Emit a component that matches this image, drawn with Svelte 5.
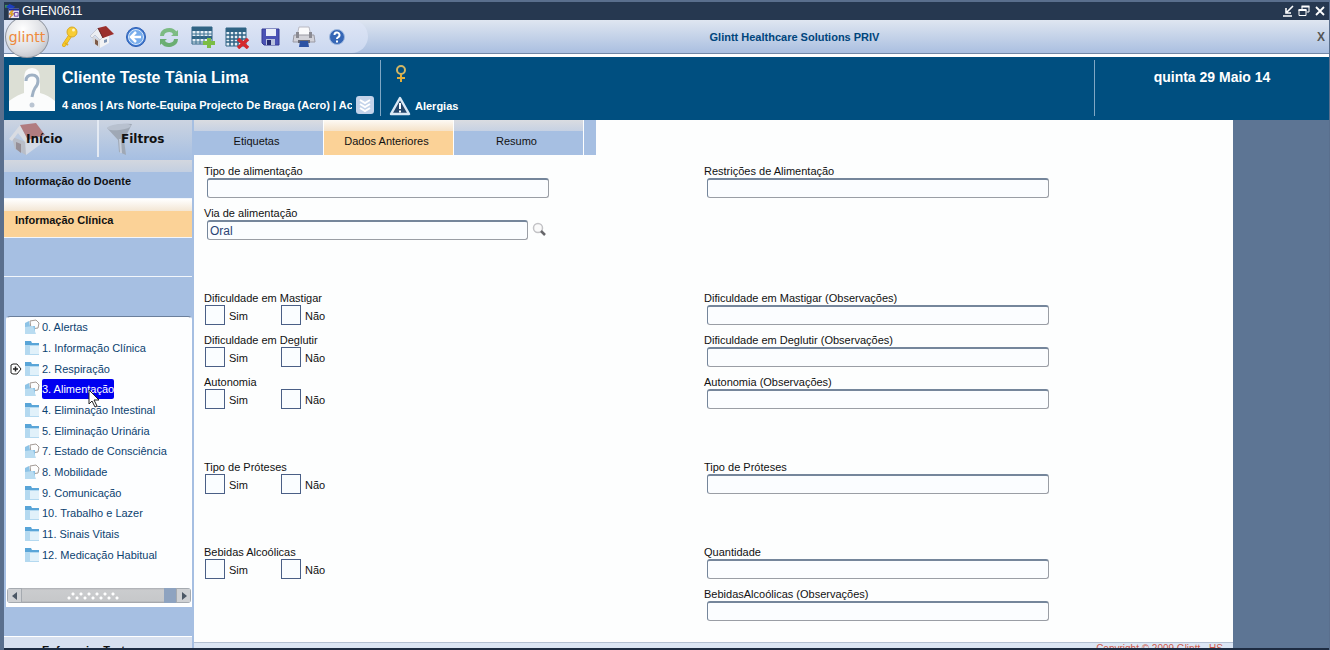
<script lang="ts">
	type TreeItem = { label: string; open?: boolean; expandable?: boolean; selected?: boolean };
	type Row = { id: string; label: string; note: string };

	const tools = [
		{ id: 'key', title: 'Chave' },
		{ id: 'home', title: 'Página inicial' },
		{ id: 'back', title: 'Voltar' },
		{ id: 'refresh', title: 'Atualizar' },
		{ id: 'add', title: 'Inserir registo' },
		{ id: 'remove', title: 'Remover registo' },
		{ id: 'save', title: 'Gravar' },
		{ id: 'print', title: 'Imprimir' },
		{ id: 'help', title: 'Ajuda' }
	];

	const tree: TreeItem[] = [
		{ label: '0. Alertas', open: true },
		{ label: '1. Informação Clínica' },
		{ label: '2. Respiração', expandable: true },
		{ label: '3. Alimentação', open: true, selected: true },
		{ label: '4. Eliminação Intestinal' },
		{ label: '5. Eliminação Urinária' },
		{ label: '7. Estado de Consciência', open: true },
		{ label: '8. Mobilidade', open: true },
		{ label: '9. Comunicação' },
		{ label: '10. Trabalho e Lazer' },
		{ label: '11. Sinais Vitais' },
		{ label: '12. Medicação Habitual' }
	];

	const tabs = ['Etiquetas', 'Dados Anteriores', 'Resumo'];
	let activeTab = $state('Dados Anteriores');

	const difficulties: Row[] = [
		{
			id: 'mastigar',
			label: 'Dificuldade em Mastigar',
			note: 'Dificuldade em Mastigar (Observações)'
		},
		{
			id: 'deglutir',
			label: 'Dificuldade em Deglutir',
			note: 'Dificuldade em Deglutir (Observações)'
		},
		{ id: 'autonomia', label: 'Autonomia', note: 'Autonomia (Observações)' }
	];

	let route = $state('Oral');
</script>

{#snippet textField(id: string, label: string)}
	<div class="field">
		<label for={id}>{label}</label>
		<input type="text" {id} />
	</div>
{/snippet}

{#snippet yesNo(id: string, label: string)}
	<fieldset class="field">
		<legend>{label}</legend>
		<div class="options">
			<label class="option"><input type="checkbox" name="{id}-sim" /><span>Sim</span></label>
			<label class="option"><input type="checkbox" name="{id}-nao" /><span>Não</span></label>
		</div>
	</fieldset>
{/snippet}

<div class="window">
	<div class="titlebar">
		<svg class="app-icon" viewBox="0 0 16 16">
			<path d="M0 1h5v3H0z" fill="#3b8f5a" />
			<path d="M1 3l4-3 6 3-5 3z" fill="#1d3fc0" />
			<rect x="4" y="5" width="11" height="10" fill="#e8e4f0" />
			<path d="M4 5h11v2H4z" fill="#1a2a9c" />
			<path d="M7 7L4 11h3l-2 4 5-5H7l2-3z" fill="#f2d21b" stroke="#a3341c" stroke-width=".5" />
			<path d="M10 9h4v4h-4z" fill="none" stroke="#6a3fa8" />
		</svg>
		<span class="title">GHEN0611</span>
		<div class="window-buttons">
			<button aria-label="Minimizar">
				<svg viewBox="0 0 12 12">
					<path d="M1 11h9M11 1L5 7M4 3v5h5" fill="none" stroke="#fff" stroke-width="1.6" />
				</svg>
			</button>
			<button aria-label="Restaurar">
				<svg viewBox="0 0 12 12">
					<path d="M4 4V1.500h7V7H8.500M1 5h7v5.500H1z" fill="none" stroke="#fff" />
					<path d="M3.500 1.500h8M.5 5h8" stroke="#fff" stroke-width="1.800" />
				</svg>
			</button>
			<button aria-label="Fechar">
				<svg viewBox="0 0 12 12">
					<path d="M2 2l8 8M10 2l-8 8" fill="none" stroke="#fff" stroke-width="1.800" />
				</svg>
			</button>
		</div>
	</div>

	<div class="toolbar">
		<div class="tool-pill">
			<div class="logo">glintt</div>
			<nav class="tools">
				{#each tools as tool (tool.id)}
					<button title={tool.title} aria-label={tool.title}>
						<svg viewBox="0 0 24 24">
							{#if tool.id === 'key'}
								<path d="M13 11L7 20" stroke="#cf9d1a" stroke-width="4" stroke-linecap="round" />
								<path d="M13 11L7 20" stroke="#f7c928" stroke-width="3" stroke-linecap="round" />
								<path d="M8 18l3 2" stroke="#e0ae20" stroke-width="2" />
								<circle cx="15" cy="7" r="5" fill="#f8cd35" stroke="#d9aa25" />
								<circle cx="16.500" cy="5" r="1.500" fill="#fff3c0" />
							{:else if tool.id === 'home'}
								<path d="M2 11l8 4v8l-7-5z" fill="#d5d6da" />
								<path d="M10 14l9-4v8l-9 5z" fill="#f3f3f4" />
								<path d="M0 11L8 3l5 9-3 3-5-5-3 3z" fill="#eceef2" stroke="#a9adb8" stroke-width=".5" />
								<path d="M8 3l8-2 8 8-11 4z" fill="#9b2f2c" />
								<path d="M8 3l5 10" stroke="#64201f" />
								<path d="M5 14l3 2v5l-3-2z" fill="#7d5a48" />
								<path d="M14 15l3-1v3l-3 1z" fill="#7e94b4" />
							{:else if tool.id === 'back'}
								<circle cx="12" cy="12" r="9.500" fill="#3f78cf" stroke="#2d5fb4" />
								<circle cx="12" cy="12" r="7.500" fill="#78adec" stroke="#d9e8fb" />
								<path d="M17 12H8M12 7l-5 5 5 5" fill="none" stroke="#fff" stroke-width="2.500" />
							{:else if tool.id === 'refresh'}
								<path d="M5 11a7 6 0 0 1 13-3" fill="none" stroke="#7cbb82" stroke-width="4" />
								<path d="M19 14a7 6 0 0 1-13 3" fill="none" stroke="#6aae72" stroke-width="4" />
								<path d="M21 5v6h-7z" fill="#7cbb82" />
								<path d="M3 20v-6h7z" fill="#6aae72" />
							{:else if tool.id === 'add'}
								<path d="M1 2h20v17H1z" fill="#e6eef5" stroke="#2f6384" />
								<path d="M1 2h20v4H1zM1 11h20v3H1z" fill="#2f6384" />
								<path d="M5 6v13M9 6v13M13 6v13M17 6v13M1 9h20M1 17h20" stroke="#3d7392" />
								<path d="M18 13v10M12 18h12" stroke="#7bbd45" stroke-width="4" />
							{:else if tool.id === 'remove'}
								<path d="M1 3h20v18H1z" fill="#e6eef5" stroke="#2f6384" />
								<path d="M1 3h20v4H1z" fill="#2f6384" />
								<path d="M5 7v14M9 7v14M13 7v14M17 7v14M1 10h20M1 14h20M1 17h20" stroke="#2f6384" stroke-width="1.500" />
								<path d="M13 14l10 9M23 14l-10 9" stroke="#d42a2e" stroke-width="3.500" />
							{:else if tool.id === 'save'}
								<path d="M4 4h17v16H6l-2-2z" fill="#4a52b4" stroke="#343b94" />
								<path d="M8 4h10v7H8z" fill="#e9edf8" />
								<path d="M8 14h9v6H8z" fill="#b9c2dd" />
								<path d="M9 15h4v5H9z" fill="#252b70" />
							{:else if tool.id === 'print'}
								<path d="M7 2h10l2 9H5z" fill="#fafafc" stroke="#b8b8c2" />
								<path d="M2 10h20l1 7H1z" fill="#d2d2d9" stroke="#9a9aa4" />
								<path d="M4 10V7h3v6H4zM17 7h3v6h-3z" fill="#8a8a92" />
								<path d="M6 15h12v3H6z" fill="#6a6a74" />
								<path d="M8 16h8l1 6H7z" fill="#2b52a4" />
							{:else}
								<circle cx="12" cy="12" r="7.500" fill="#3566b6" stroke="#9db7df" />
								<path d="M9.500 10a2.500 2.500 0 1 1 3.500 2.300q-1 .5-1 1.700M12 15.500v2" fill="none" stroke="#fff" stroke-width="2" />
							{/if}
						</svg>
					</button>
				{/each}
			</nav>
		</div>
		<div class="product">Glintt Healthcare Solutions PRIV</div>
		<button class="close-page" aria-label="Fechar página">X</button>
	</div>

	<header class="patient">
		<svg class="photo" viewBox="0 0 46 46">
			<rect width="46" height="46" fill="#dcdfd5" />
			<path d="M0 36q10-7 15-8V14q0-11 8-11t8 11v14q8 2 15 8v10H0z" fill="#fbfcfc" />
			<path d="M17 16q0-6 6-6t6 6q0 4-3 7-2 3-3 9" fill="none" stroke="#9fb1c4" stroke-width="3" />
			<circle cx="23" cy="40" r="2.500" fill="#bac5d2" />
		</svg>
		<div class="identity">
			<h1>Cliente Teste Tânia Lima</h1>
			<div class="details">
				<p>4 anos | Ars Norte-Equipa Projecto De Braga (Acro) | Acto</p>
				<button class="more" aria-label="Mais detalhes">
					<svg viewBox="0 0 18 18">
						<path d="M4 4l5 3 5-3M4 8l5 3 5-3M4 12l5 3 5-3" fill="none" stroke="#fff" stroke-width="2" />
					</svg>
				</button>
			</div>
		</div>
		<div class="alerts">
			<svg class="gender" viewBox="0 0 12 18">
				<circle cx="6" cy="5" r="4" fill="none" stroke="#d2b765" stroke-width="2" />
				<path d="M6 9v8M2 13h8" stroke="#e3ae3b" stroke-width="2" />
			</svg>
			<a href="#alergias">
				<svg class="warning" viewBox="0 0 22 20">
					<path d="M11 2L20 18H2z" fill="#24466b" stroke="#d9e8f5" stroke-width="2.500" stroke-linejoin="round" />
					<path d="M11 7v6M11 14.500v2" stroke="#fff" stroke-width="2" />
				</svg>
				Alergias
			</a>
		</div>
		<time datetime="2014-05-29">quinta 29 Maio 14</time>
	</header>

	<div class="body">
		<aside class="sidebar">
			<div class="shortcuts">
				<button>
					<svg viewBox="0 0 38 34">
						<path d="M4 15l14 5v13L7 27z" fill="#b9bec8" />
						<path d="M17 18l16-5v9l-15 11z" fill="#d5dbe6" />
						<path d="M1 17L12 3l8 15-3 2-7-9-6 8z" fill="#d9dce2" />
						<path d="M12 3l16-2 9 12-17 5z" fill="#b17c80" />
						<path d="M8 20l5 2v9l-5-4z" fill="#968f96" />
					</svg>
					<span>Início</span>
				</button>
				<button>
					<svg viewBox="0 0 38 34">
						<path d="M4 6q12-5 25-4L21 18l2 15-7-3-1-12z" fill="#9fa8b5" />
						<ellipse cx="16" cy="5" rx="12" ry="3" fill="#b8c1cf" transform="rotate(-6 16 5)" />
						<path d="M17 17l1 14" stroke="#c7cedb" stroke-width="2" />
					</svg>
					<span>Filtros</span>
				</button>
			</div>
			<nav class="sections">
				<a href="#doente">Informação do Doente</a>
				<a href="#clinica" class="active">Informação Clínica</a>
				<div class="blank"></div>
				<div class="blank"></div>
			</nav>
			<div class="tree-panel">
				<ul class="tree">
					{#each tree as item (item.label)}
						<li>
							<span class="toggle">
								{#if item.expandable}
									<svg viewBox="0 0 12 12">
										<path d="M1 2l2-1h4l4 5-4 5H3l-2-1z" fill="#fff" stroke="#222" />
										<path d="M3 6h5M5.500 3.500v5" stroke="#222" stroke-width="1.500" />
									</svg>
								{/if}
							</span>
							<svg class="folder" viewBox="0 0 16 16">
								{#if item.open}
									<path d="M6 2l6-1 3 3-1 5-7 1z" fill="#fdfdfd" stroke="#a39b96" />
									<path d="M1 4l4-2 1 5h5v8H1z" fill="#8dc3e6" />
									<path d="M1 8l8-1 3 8H1z" fill="#b9dcf1" />
								{:else}
									<path d="M1 1h6l1 2h7v12H1z" fill="#59a5d8" />
									<path d="M1 5h14v10H1z" fill="#b4d9f0" />
									<path d="M6 6h9v8H6z" fill="#e1f1fa" />
								{/if}
							</svg>
							<a href="#tree" class:selected={item.selected}>{item.label}</a>
							{#if item.selected}
								<svg class="pointer" viewBox="0 0 12 19">
									<path d="M1 1v14l3-3 3 6 2-1-3-6h5z" fill="#fff" stroke="#222" />
								</svg>
							{/if}
						</li>
					{/each}
				</ul>
				<div class="scrollbar">
					<button aria-label="Deslocar para a esquerda">
						<svg viewBox="0 0 8 8"><path d="M6 0v8L1 4z" fill="#4c5866" /></svg>
					</button>
					<div class="thumb"><span></span></div>
					<button aria-label="Deslocar para a direita">
						<svg viewBox="0 0 8 8"><path d="M2 0v8l5-4z" fill="#4c5866" /></svg>
					</button>
				</div>
			</div>
			<div class="sidebar-footer">Enfermeiro Teste</div>
		</aside>

		<main>
			<div class="tabs">
				{#each tabs as tab (tab)}
					<button class:active={tab === activeTab} onclick={() => (activeTab = tab)}>{tab}</button>
				{/each}
				<div class="tabs-end"></div>
			</div>

			<form>
				<div class="group">
					{@render textField('tipo', 'Tipo de alimentação')}
					{@render textField('restricoes', 'Restrições de Alimentação')}
					<div class="field">
						<label for="via">Via de alimentação</label>
						<div class="lookup">
							<input type="text" id="via" bind:value={route} />
							<button type="button" aria-label="Pesquisar">
								<svg viewBox="0 0 16 16">
									<circle cx="7" cy="6" r="4.500" fill="#fafafa" stroke="#c3c3c6" stroke-width="1.500" />
									<path d="M10 9l4 4" stroke="#66666a" stroke-width="2.500" />
								</svg>
							</button>
						</div>
					</div>
				</div>
				<div class="group">
					{#each difficulties as row (row.id)}
						{@render yesNo(row.id, row.label)}
						{@render textField(`${row.id}-obs`, row.note)}
					{/each}
				</div>
				<div class="group">
					{@render yesNo('proteses', 'Tipo de Próteses')}
					{@render textField('proteses-tipo', 'Tipo de Próteses')}
				</div>
				<div class="group">
					{@render yesNo('bebidas', 'Bebidas Alcoólicas')}
					{@render textField('quantidade', 'Quantidade')}
					<div></div>
					{@render textField('bebidas-obs', 'BebidasAlcoólicas (Observações)')}
				</div>
			</form>

			<footer>Copyright © 2009 Glintt - HS</footer>
		</main>
	</div>
</div>

<style>
	:global(body) {
		background: #5d7594;
	}

	.window {
		--navy: #263850;
		--petrol: #004f80;
		--blue: #a6bfe2;
		--orange: #fbd297;
		--shade: linear-gradient(#d3d7df, #c3cfe1);
		display: flex;
		flex-direction: column;
		box-sizing: border-box;
		height: 100vh;
		overflow: hidden;
		border: solid #5a6f8d;
		border-width: 2px 1px 0 4px;
		font-family: 'Liberation Sans', Arial, sans-serif;
		font-size: 11px;
		color: #111;
	}

	.window > * {
		flex: none;
	}

	button {
		padding: 0;
		border: 0;
		background: none;
		font: inherit;
		color: inherit;
		cursor: pointer;
	}

	svg {
		display: block;
	}

	a {
		color: inherit;
		text-decoration: none;
	}

	/* Title bar */
	.titlebar {
		display: flex;
		align-items: center;
		gap: 2px;
		height: 18px;
		padding: 0 3px 0 1px;
		background: var(--navy);
		z-index: 2;
	}

	.app-icon {
		width: 15px;
		height: 15px;
	}

	.title {
		flex: 1;
		font-size: 12px;
		color: #fff;
	}

	.window-buttons {
		display: flex;
		gap: 4px;
	}

	.window-buttons svg {
		width: 12px;
		height: 12px;
	}

	/* Toolbar */
	.toolbar {
		display: flex;
		align-items: center;
		height: 33px;
		border-bottom: 1px solid #7187a6;
		background: linear-gradient(#dfe6f1, #aabfe0);
	}

	.tool-pill {
		display: flex;
		align-items: center;
		width: 364px;
		height: 33px;
		border-radius: 0 17px 17px 0;
		background: linear-gradient(#dfe6f5, #cbd8f0);
	}

	.logo {
		display: flex;
		align-items: center;
		justify-content: center;
		flex: none;
		box-sizing: border-box;
		width: 44px;
		height: 42px;
		margin: 0 3px 0 1px;
		border: 1px solid #8e949e;
		border-radius: 50%;
		background: radial-gradient(circle at 40% 30%, #fff, #d9dbe0 60%, #a9adb6);
		font-family: 'DejaVu Sans', sans-serif;
		font-size: 14px;
		color: #ee8a3c;
		z-index: 1;
	}

	.tools {
		display: flex;
		width: 302px;
	}

	.tools button {
		display: flex;
		flex: 1;
		justify-content: center;
	}

	.tools svg {
		width: 24px;
		height: 24px;
		fill: none;
	}

	.product {
		flex: 1;
		padding-right: 92px;
		text-align: center;
		font-weight: bold;
		color: #00457c;
	}

	.close-page {
		padding: 0 4px;
		font-size: 12px;
		font-weight: bold;
		color: #555;
	}

	/* Patient header */
	.patient {
		display: flex;
		align-items: center;
		height: 62px;
		border-top: 3px solid #fff;
		background: var(--petrol);
		font-weight: bold;
		color: #fff;
	}

	.photo {
		width: 46px;
		height: 46px;
		margin: 0 7px 0 5px;
	}

	.identity {
		width: 318px;
		padding-top: 6px;
	}

	h1 {
		margin: 0 0 8px;
		font-size: 16px;
		font-weight: bold;
		line-height: 20px;
	}

	.details {
		display: flex;
		align-items: center;
		gap: 4px;
	}

	.details p {
		width: 290px;
		margin: 0;
		overflow: hidden;
		white-space: nowrap;
	}

	.more {
		border-radius: 3px;
		background: #c3d3ea;
	}

	.more svg {
		width: 18px;
		height: 18px;
	}

	.alerts {
		flex: 1;
		padding: 5px 8px 0;
		border: solid #7fa7c4;
		border-width: 0 1px;
	}

	.gender {
		width: 12px;
		height: 18px;
		margin: 0 0 13px 6px;
	}

	.alerts a {
		display: flex;
		align-items: center;
		gap: 4px;
	}

	.warning {
		width: 22px;
		height: 20px;
	}

	time {
		align-self: flex-start;
		width: 234px;
		padding-top: 12px;
		text-align: center;
		font-size: 14px;
	}

	/* Page body */
	.window > .body {
		display: flex;
		flex: 1;
		min-height: 0;
		border-top: 1px solid var(--petrol);
		border-bottom: 2px solid #1e2c42;
		background: #5d7594;
	}

	.sidebar {
		display: flex;
		flex-direction: column;
		flex: none;
		box-sizing: border-box;
		width: 190px;
		padding-right: 2px;
		overflow: hidden;
		background: var(--blue);
	}

	.shortcuts {
		display: flex;
		flex: none;
		height: 40px;
		background: linear-gradient(#ccd4e1, var(--blue));
	}

	.shortcuts button {
		display: flex;
		align-items: center;
		flex: 1;
		height: 37px;
		font-family: 'DejaVu Sans', Verdana, sans-serif;
		font-size: 12px;
		font-weight: bold;
	}

	.shortcuts button + button {
		border-left: 2px solid #e4eaf3;
	}

	.shortcuts svg {
		width: 38px;
		height: 34px;
		margin: 0 -20px 0 4px;
	}

	.shortcuts span {
		position: relative;
	}

	.sections a,
	.sections .blank {
		display: block;
		box-sizing: border-box;
		height: 39px;
		border-bottom: 1px solid #f2f6fb;
	}

	.sections a {
		padding: 15px 11px 0;
		background: var(--shade) 0 0 / 100% 12px no-repeat;
		font-weight: bold;
	}

	.sections a.active {
		background:
			linear-gradient(#fff, #f3e6d4) 0 0 / 100% 12px no-repeat,
			var(--orange);
	}

	.sections .blank:last-child {
		border-bottom: 0;
	}

	.tree-panel {
		display: flex;
		flex-direction: column;
		flex: none;
		margin-left: 2px;
		padding-bottom: 3px;
		border: 1px solid #fff;
		border-top: 1px solid #6b7f9b;
		border-radius: 4px 4px 0 0;
		background: #fdfeff;
	}

	.tree {
		display: grid;
		grid-auto-rows: 1fr;
		height: 248px;
		margin: 0 0 23px;
		padding: 0;
		list-style: none;
		color: #0c4270;
	}

	.tree li {
		display: flex;
		align-items: center;
		position: relative;
	}

	.toggle {
		width: 14px;
		padding-left: 3px;
	}

	.toggle svg {
		width: 12px;
		height: 12px;
	}

	.folder {
		width: 16px;
		height: 16px;
		margin-right: 2px;
	}

	.tree a {
		line-height: 20px;
		white-space: nowrap;
	}

	.tree a.selected {
		border-radius: 2px;
		background: #0000f0;
		color: #fff;
	}

	.pointer {
		position: absolute;
		top: 10px;
		left: 81px;
		width: 12px;
		height: 19px;
		z-index: 1;
	}

	.scrollbar {
		display: flex;
		height: 15px;
		border-radius: 4px;
		background: #8ea3c0;
		overflow: hidden;
	}

	.scrollbar button {
		display: flex;
		align-items: center;
		justify-content: center;
		width: 15px;
		background: #cfd1d4;
		box-shadow: inset 0 0 0 1px #a5aab0;
	}

	.scrollbar svg {
		width: 8px;
		height: 8px;
	}

	.thumb {
		display: flex;
		align-items: center;
		justify-content: center;
		flex: 1;
		margin-right: 12px;
		background: linear-gradient(#a9acb1, #cbccce 2px, #c6c8ca 13px, #9a9da3);
	}

	.thumb span {
		width: 52px;
		height: 8px;
		background:
			radial-gradient(circle at 6px 2px, #fff 1px, transparent 2px) 0 0 / 8px 8px,
			radial-gradient(circle at 2px 6px, #fff 1px, transparent 2px) 0 0 / 8px 8px;
	}

	.sidebar-footer {
		margin-top: auto;
		height: 11px;
		padding-left: 38px;
		border-top: 1px solid #fff;
		background: #d7e0ef;
		font-weight: bold;
		line-height: 26px;
	}

	/* Form page */
	main {
		display: flex;
		flex-direction: column;
		flex: 1;
		min-width: 0;
		margin-right: 96px;
		background: #fdfefe;
	}

	.tabs {
		display: flex;
		gap: 1px;
		height: 35px;
	}

	.tabs button {
		width: 129px;
		padding: 6px 4px 0 0;
		background:
			linear-gradient(#dadce1, #c6d1e3) 0 0 / 100% 11px no-repeat,
			var(--blue);
	}

	.tabs button.active {
		background:
			linear-gradient(#fdfaf5, #f5e2c8) 0 0 / 100% 11px no-repeat,
			var(--orange);
	}

	.tabs-end {
		width: 12px;
		background: var(--blue);
	}

	form {
		display: flex;
		flex-direction: column;
		gap: 51px;
		flex: 1;
		padding: 9px 29px 0 10px;
	}

	.group {
		display: grid;
		grid-template-columns: 1fr 1fr;
		row-gap: 8px;
	}

	.field {
		min-width: 0;
		margin: 0;
		padding: 0;
		border: 0;
	}

	.field > label,
	legend {
		display: block;
		height: 14px;
		padding: 0;
		line-height: 14px;
	}

	input[type='text'] {
		display: block;
		box-sizing: border-box;
		width: 342px;
		max-width: 100%;
		height: 20px;
		margin: 0 0 0 3px;
		padding: 0 2px;
		border: 1px solid #9a9ea5;
		border-top: 2px solid #75869b;
		border-left-color: #75869b;
		border-radius: 3px;
		background: #fbfdff;
		font: inherit;
		font-size: 12px;
		color: #2b4474;
	}

	.lookup {
		display: flex;
		align-items: center;
		gap: 3px;
	}

	.lookup input[type='text'] {
		width: 321px;
	}

	.lookup svg {
		width: 16px;
		height: 16px;
	}

	.options {
		display: flex;
		padding-left: 1px;
	}

	.option {
		display: flex;
		align-items: center;
		gap: 4px;
		width: 76px;
	}

	.option span {
		padding-top: 2px;
	}

	input[type='checkbox'] {
		appearance: none;
		box-sizing: border-box;
		width: 20px;
		height: 20px;
		margin: 0;
		border: 1px solid #4a5f86;
		background: #fafdff;
	}

	input[type='checkbox']:checked {
		background: #4a5f86;
		box-shadow: inset 0 0 0 4px #fafdff;
	}

	footer {
		height: 5px;
		padding-right: 10px;
		border-top: 1px solid #b4c0d2;
		overflow: hidden;
		background: #dce6f4;
		text-align: right;
		font-size: 10px;
		line-height: 12px;
		color: #cf5a4c;
	}
</style>
